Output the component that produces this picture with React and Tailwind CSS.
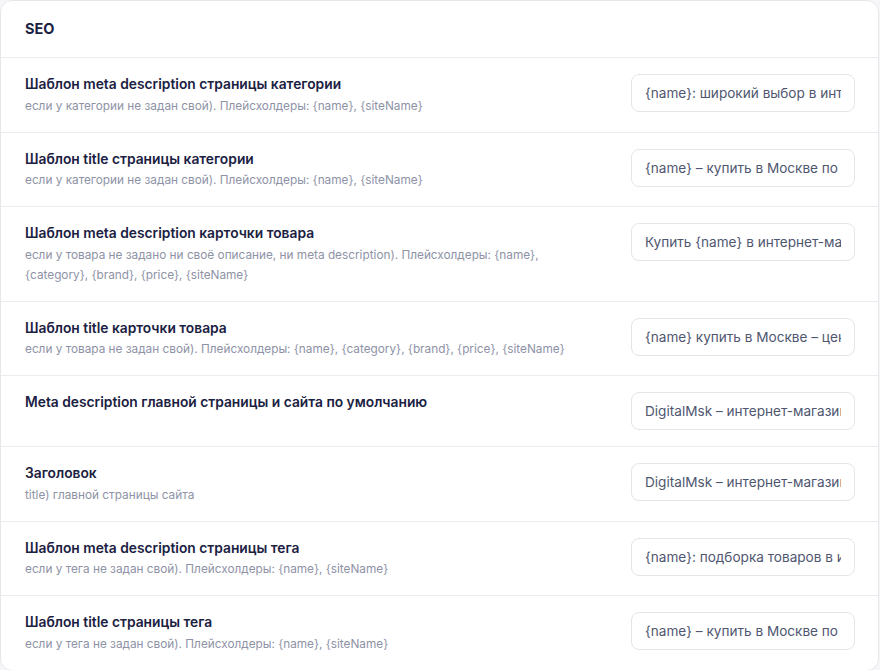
const rows = [
  {
    title: "Шаблон meta description страницы категории",
    hint: "если у категории не задан свой). Плейсхолдеры: {name}, {siteName}",
    value: "{name}: широкий выбор в интернет-магазине {siteName}",
  },
  {
    title: "Шаблон title страницы категории",
    hint: "если у категории не задан свой). Плейсхолдеры: {name}, {siteName}",
    value: "{name} – купить в Москве по выгодной цене | {siteName}",
  },
  {
    title: "Шаблон meta description карточки товара",
    hint: "если у товара не задано ни своё описание, ни meta description). Плейсхолдеры: {name}, {category}, {brand}, {price}, {siteName}",
    value: "Купить {name} в интернет-магазине {siteName}",
  },
  {
    title: "Шаблон title карточки товара",
    hint: "если у товара не задан свой). Плейсхолдеры: {name}, {category}, {brand}, {price}, {siteName}",
    value: "{name} купить в Москве – цена {price}",
  },
  {
    title: "Meta description главной страницы и сайта по умолчанию",
    hint: "",
    value: "DigitalMsk – интернет-магазин электроники",
  },
  {
    title: "Заголовок",
    hint: "title) главной страницы сайта",
    value: "DigitalMsk – интернет-магазин электроники",
  },
  {
    title: "Шаблон meta description страницы тега",
    hint: "если у тега не задан свой). Плейсхолдеры: {name}, {siteName}",
    value: "{name}: подборка товаров в интернет-магазине {siteName}",
  },
  {
    title: "Шаблон title страницы тега",
    hint: "если у тега не задан свой). Плейсхолдеры: {name}, {siteName}",
    value: "{name} – купить в Москве по выгодной цене | {siteName}",
  },
];

function SettingRow({ title, hint, value }) {
  return (
    <div className="flex items-start gap-10 border-t border-[#ebecef] pl-6 pr-[23px] py-4">
      <div className="flex-1 min-w-0">
        <div className="text-[13.8px] leading-5 font-semibold text-[#1b2142]">{title}</div>
        {hint && (
          <div className="mt-[1.5px] text-[11.8px] leading-5 text-[#8e92a6]">{hint}</div>
        )}
      </div>
      <input
        readOnly
        value={value}
        className="h-[38px] w-[224px] shrink-0 rounded-lg border border-[#e4e5ea] bg-white px-[13px] text-[13.6px] leading-5 text-[#4f566f] outline-none"
      />
    </div>
  );
}

export default function App() {
  return (
    <div
      className="min-h-screen bg-[#f6f6f8]"
      style={{ fontFamily: "Inter, 'Noto Sans', sans-serif" }}
    >
      <div className="w-[879px] overflow-hidden rounded-xl border border-[#e6e7eb] bg-white">
        <div className="px-6 py-[18px] text-[14.5px] leading-5 font-bold text-[#1b2142]">SEO</div>
        {rows.map((r) => (
          <SettingRow key={r.title} {...r} />
        ))}
      </div>
    </div>
  );
}
